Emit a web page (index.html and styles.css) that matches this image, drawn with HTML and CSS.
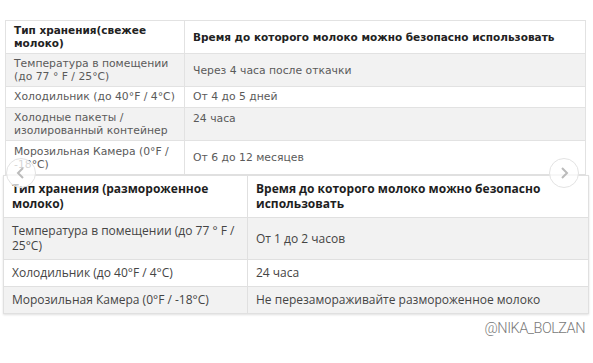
FILE: index.html
```html
<!DOCTYPE html>
<html lang="ru">
<head>
<meta charset="utf-8">
<link rel="stylesheet" href="styles.css">
</head>
<body>
<div class="page">
  <table class="t1">
    <colgroup><col class="t1-c1"><col></colgroup>
    <tr class="head">
      <th>Тип хранения(свежее молоко)</th>
      <th>Время до которого молоко можно безопасно использовать</th>
    </tr>
    <tr class="grey">
      <td>Температура в помещении (до 77 ° F / 25°C)</td>
      <td>Через 4 часа после откачки</td>
    </tr>
    <tr>
      <td>Холодильник (до 40°F / 4°C)</td>
      <td>От 4 до 5 дней</td>
    </tr>
    <tr class="grey">
      <td>Холодные пакеты / изолированный контейнер</td>
      <td class="top">24 часа</td>
    </tr>
    <tr class="last">
      <td>Морозильная Камера (0°F / -18°C)</td>
      <td>От 6 до 12 месяцев</td>
    </tr>
  </table>

  <table class="t2">
    <colgroup><col class="t2-c1"><col></colgroup>
    <tr class="head">
      <th>Тип хранения (размороженное молоко)</th>
      <th>Время до которого молоко можно безопасно использовать</th>
    </tr>
    <tr class="grey">
      <td>Температура в помещении (до 77 ° F / 25°C)</td>
      <td>От 1 до 2 часов</td>
    </tr>
    <tr>
      <td>Холодильник (до 40°F / 4°C)</td>
      <td>24 часа</td>
    </tr>
    <tr class="grey">
      <td>Морозильная Камера (0°F / -18°C)</td>
      <td>Не перезамораживайте размороженное молоко</td>
    </tr>
  </table>

  <div class="mark">@NIKA_BOLZAN</div>

  <div class="nav nav-left">
    <svg width="14" height="14" viewBox="0 0 14 14"><path d="M9 2 L4 7 L9 12" fill="none" stroke="#bbb" stroke-width="2"/></svg>
  </div>
  <div class="nav nav-right">
    <svg width="14" height="14" viewBox="0 0 14 14"><path d="M5 2 L10 7 L5 12" fill="none" stroke="#bbb" stroke-width="2"/></svg>
  </div>
</div>
</body>
</html>
```

FILE: styles.css
```css
html, body {
  margin: 0;
  padding: 0;
  background: #fff;
}

.page {
  position: relative;
  width: 593px;
  height: 363px;
  padding-top: 20px;
  box-sizing: border-box;
  overflow: hidden;
}

table {
  border-collapse: collapse;
  table-layout: fixed;
}

td, th {
  text-align: left;
  vertical-align: middle;
}

.t1 {
  margin-left: 5px;
  width: 581px;
  height: 155px;
  font-family: "DejaVu Sans", sans-serif;
  font-size: 10.8px;
  line-height: 13px;
  color: #5a5a5a;
}

.t1-c1 { width: 179px; }

.t1 td, .t1 th {
  border: 1px solid #e2e2e2;
  padding: 3px 8px 3px 8px;
}

.t1 th {
  color: #222;
  font-weight: bold;
  font-size: 10.5px;
}

.t1 .head { height: 33px; }
.t1 .grey td { background: #f2f2f2; }
.t1 td.top { vertical-align: top; padding-top: 4px; }
.t1 .last { height: 34px; }

.t2 {
  margin-left: 3px;
  width: 586px;
  font-family: "Open Sans", sans-serif;
  font-size: 12px;
  line-height: 15px;
  color: #444;
  box-shadow: 0 1px 2px rgba(0,0,0,0.12);
  background: #fff;
}

.t2-c1 { width: 244px; }

.t2 td, .t2 th {
  border: 1px solid #e0e0e0;
  padding: 5px 8px 6px 8px;
}

.t2 th {
  color: #1e1e1e;
  font-weight: bold;
}

.t2 .grey td { background: #f2f2f2; }

.mark {
  margin-top: 6px;
  padding-right: 8px;
  text-align: right;
  font-family: Roboto, sans-serif;
  font-weight: 300;
  font-size: 14.5px;
  letter-spacing: -0.5px;
  color: #7a7a7a;
}

.nav {
  position: absolute;
  width: 30px;
  height: 30px;
  border-radius: 50%;
  border: 1px solid #e3e3e3;
  background: rgba(255,255,255,0.75);
  display: flex;
  align-items: center;
  justify-content: center;
  box-sizing: border-box;
}

.nav-left { left: 6px; top: 158px; }
.nav-right { left: 549px; top: 158px; }
```
